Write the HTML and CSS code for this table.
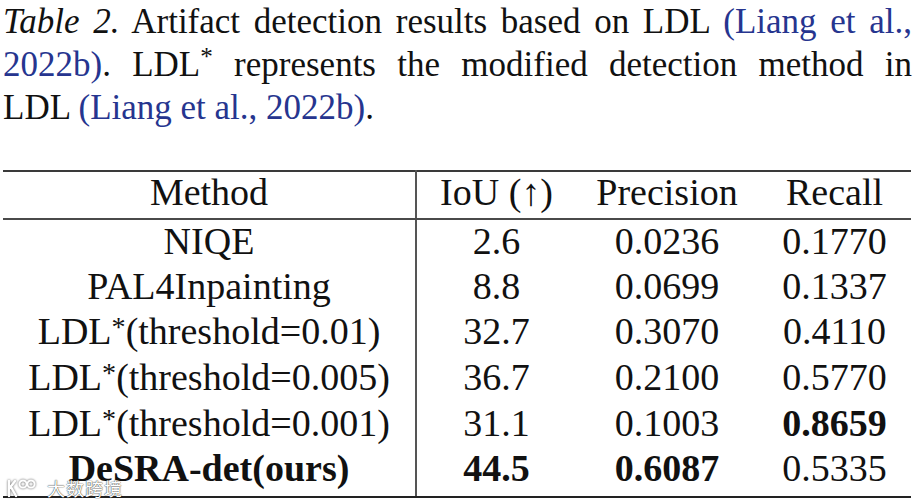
FILE: index.html
```html
<!DOCTYPE html>
<html>
<head>
<meta charset="utf-8">
<link rel="stylesheet" href="styles.css">
</head>
<body>
<div class="page">
  <div class="caption">
    <div class="cline just"><span class="ital">Table 2.</span> Artifact detection results based on LDL <span class="cite">(Liang et al.,</span></div>
    <div class="cline just"><span class="cite">2022b)</span>. LDL<sup class="star">*</sup> represents the modified detection method in</div>
    <div class="cline">LDL <span class="cite">(Liang et al., 2022b)</span>.</div>
  </div>
  <table class="results">
    <colgroup>
      <col class="c1"><col class="c2"><col class="c3"><col class="c4">
    </colgroup>
    <thead>
      <tr><th class="sep">Method</th><th>IoU (↑)</th><th>Precision</th><th>Recall</th></tr>
    </thead>
    <tbody>
      <tr><td class="sep">NIQE</td><td>2.6</td><td>0.0236</td><td>0.1770</td></tr>
      <tr><td class="sep">PAL4Inpainting</td><td>8.8</td><td>0.0699</td><td>0.1337</td></tr>
      <tr><td class="sep">LDL<span class="tstar">*</span>(threshold=0.01)</td><td>32.7</td><td>0.3070</td><td>0.4110</td></tr>
      <tr><td class="sep">LDL<span class="tstar">*</span>(threshold=0.005)</td><td>36.7</td><td>0.2100</td><td>0.5770</td></tr>
      <tr><td class="sep">LDL<span class="tstar">*</span>(threshold=0.001)</td><td>31.1</td><td>0.1003</td><td class="b">0.8659</td></tr>
      <tr class="last"><td class="sep b">DeSRA-det(ours)</td><td class="b">44.5</td><td class="b">0.6087</td><td>0.5335</td></tr>
    </tbody>
  </table>
  <div class="watermark">
    <svg class="wm-logo" width="38" height="22" viewBox="0 0 38 22">
      <path d="M3 4 V19 M3 12 L9 4 M5 10 L10 19" fill="none" stroke="#fff" stroke-width="2.4" stroke-linecap="round"/>
      <circle cx="17" cy="7" r="3.6" fill="none" stroke="#fff" stroke-width="2"/>
      <circle cx="25" cy="7" r="3.6" fill="none" stroke="#fff" stroke-width="2"/>
    </svg>
    <span class="wm-text">大数跨境</span>
  </div>
</div>
</body>
</html>
```

FILE: styles.css
```css
html, body {
  margin: 0;
  padding: 0;
  background: #ffffff;
}
.page {
  position: relative;
  width: 924px;
  height: 504px;
  overflow: hidden;
  font-family: "Liberation Serif", "Times New Roman", serif;
  color: #111111;
}
.caption {
  width: 909px;
  padding: 0 0 0 3px;
  font-size: 35px;
  line-height: 43px;
}
.cline {
  white-space: nowrap;
  height: 43px;
}
.cline.just {
  text-align: justify;
  text-align-last: justify;
  white-space: normal;
}
.ital {
  font-style: italic;
}
.cite {
  color: #26358f;
}
.star {
  font-size: 0.72em;
  line-height: 0;
  vertical-align: 0.42em;
}
.results {
  margin: 41px 0 0 3px;
  width: 908px;
  border-collapse: collapse;
  table-layout: fixed;
  font-size: 38px;
}
.c1 { width: 413px; }
.c2 { width: 160px; }
.c3 { width: 182px; }
.c4 { width: 153px; }
.results th, .results td {
  padding: 0;
  text-align: center;
  font-weight: normal;
  white-space: nowrap;
  line-height: 1;
}
.results thead th {
  height: 48px;
  padding-bottom: 7px;
  box-sizing: border-box;
  border-top: 2px solid #3a3a3a;
  border-bottom: 2px solid #4a4a4a;
}
.results tbody td {
  height: 45.6px;
  padding-bottom: 3px;
  box-sizing: border-box;
}
.results tbody tr.last td {
  height: 50px;
  padding-bottom: 7px;
  border-bottom: 2px solid #222;
}
.results .sep {
  border-right: 2px solid #555;
}
.results .b {
  font-weight: bold;
}
.tstar {
  font-size: 0.74em;
  vertical-align: 0.3em;
  line-height: 0;
}
.watermark {
  position: absolute;
  left: 6px;
  top: 475px;
  display: flex;
  align-items: center;
  gap: 3px;
}
.wm-text {
  font-family: "Noto Sans CJK SC", sans-serif;
  font-size: 18px;
  color: #ffffff;
  text-shadow: 0 0 1px rgba(0,0,0,0.7), 0 0 1px rgba(0,0,0,0.5), 0 0 2px rgba(0,0,0,0.2);
  letter-spacing: 1px;
}
.wm-logo {
  filter: drop-shadow(0 0 1px rgba(0,0,0,0.65));
}
```
